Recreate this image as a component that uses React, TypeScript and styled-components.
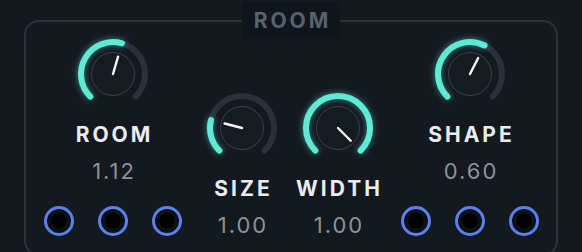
import React from 'react';
import styled, { createGlobalStyle } from 'styled-components';

const TEAL = '#5eead4';

type KnobProps = {
  value: number; // 0..1
};

const polar = (cx: number, cy: number, r: number, deg: number) => {
  const a = (deg * Math.PI) / 180;
  return [cx + r * Math.sin(a), cy - r * Math.cos(a)];
};

const arcPath = (from: number, to: number, r = 32) => {
  const [x1, y1] = polar(40, 40, r, from);
  const [x2, y2] = polar(40, 40, r, to);
  const large = to - from > 180 ? 1 : 0;
  return `M ${x1} ${y1} A ${r} ${r} 0 ${large} 1 ${x2} ${y2}`;
};

const Knob = ({ value }: KnobProps) => {
  const angle = -135 + 270 * value;
  const [px, py] = polar(40, 40, 18, angle);
  return (
    <KnobSvg viewBox="0 0 80 80" width={80} height={80}>
      <path d={arcPath(-135, 135)} stroke="#29313a" strokeWidth={6} fill="none" strokeLinecap="round" />
      <path
        d={arcPath(-135, angle)}
        stroke={TEAL}
        strokeWidth={6}
        fill="none"
        strokeLinecap="round"
        style={{ filter: 'drop-shadow(0 0 3px rgba(94,234,212,0.55))' }}
      />
      <circle cx={40} cy={40} r={21.5} fill="#161b22" stroke="#39424c" strokeWidth={1} />
      <line x1={40} y1={40} x2={px} y2={py} stroke="#f4f6f8" strokeWidth={2.4} strokeLinecap="round" />
    </KnobSvg>
  );
};

const Control = ({ label, value, pos, drop, ports }: { label: string; value: string; pos: number; drop?: boolean; ports?: boolean }) => (
  <Column $drop={drop}>
    <Knob value={pos} />
    <Label>{label}</Label>
    <Value>{value}</Value>
    {ports && (
      <Ports>
        <Port />
        <Port />
        <Port />
      </Ports>
    )}
  </Column>
);

const App = () => (
  <>
    <GlobalStyle />
    <Panel>
      <Title>ROOM</Title>
      <Grid>
        <Control label="ROOM" value="1.12" pos={0.56} ports />
        <Control label="SIZE" value="1.00" pos={0.22} drop />
        <Control label="WIDTH" value="1.00" pos={1} drop />
        <Control label="SHAPE" value="0.60" pos={0.6} ports />
      </Grid>
    </Panel>
  </>
);

const GlobalStyle = createGlobalStyle`
  html, body {
    margin: 0;
    background: #141920;
    font-family: Inter, "Noto Sans", sans-serif;
    overflow: hidden;
  }
`;

const Panel = styled.div`
  position: relative;
  margin: 20px 0 0 24px;
  width: 534px;
  height: 236px;
  box-sizing: border-box;
  border: 2px solid #29313a;
  border-radius: 15px;
`;

const Title = styled.div`
  position: absolute;
  top: -20px;
  left: 50%;
  transform: translateX(-50%);
  width: 98px;
  height: 37px;
  box-sizing: border-box;
  padding-left: 3px;
  display: flex;
  align-items: center;
  justify-content: center;
  background: #10151b;
  color: #56636e;
  font-size: 21px;
  font-weight: 700;
  letter-spacing: 3px;
`;

const Grid = styled.div`
  display: grid;
  grid-template-columns: 162px 96px 96px 168px;
  padding: 12px 0 0 6px;
`;

const Column = styled.div<{ $drop?: boolean }>`
  display: flex;
  flex-direction: column;
  align-items: center;
  padding-top: ${({ $drop }) => ($drop ? '54px' : '0')};
`;

const KnobSvg = styled.svg`
  display: block;
  overflow: visible;
`;

const Label = styled.div`
  margin-top: 8px;
  padding-left: 3px;
  line-height: 26px;
  font-size: 21px;
  font-weight: 700;
  letter-spacing: 3px;
  color: #e9edf0;
`;

const Value = styled.div`
  margin-top: 10px;
  padding-left: 2px;
  line-height: 26px;
  font-size: 22px;
  letter-spacing: 2px;
  color: #89929a;
`;

const Ports = styled.div`
  display: flex;
  gap: 24px;
  margin-top: 22px;
`;

const Port = styled.div`
  width: 30px;
  height: 30px;
  box-sizing: border-box;
  border: 3px solid #5b80f0;
  border-radius: 50%;
  background: radial-gradient(circle, #000 0 7px, #0d1116 8px);
`;

export default App;
